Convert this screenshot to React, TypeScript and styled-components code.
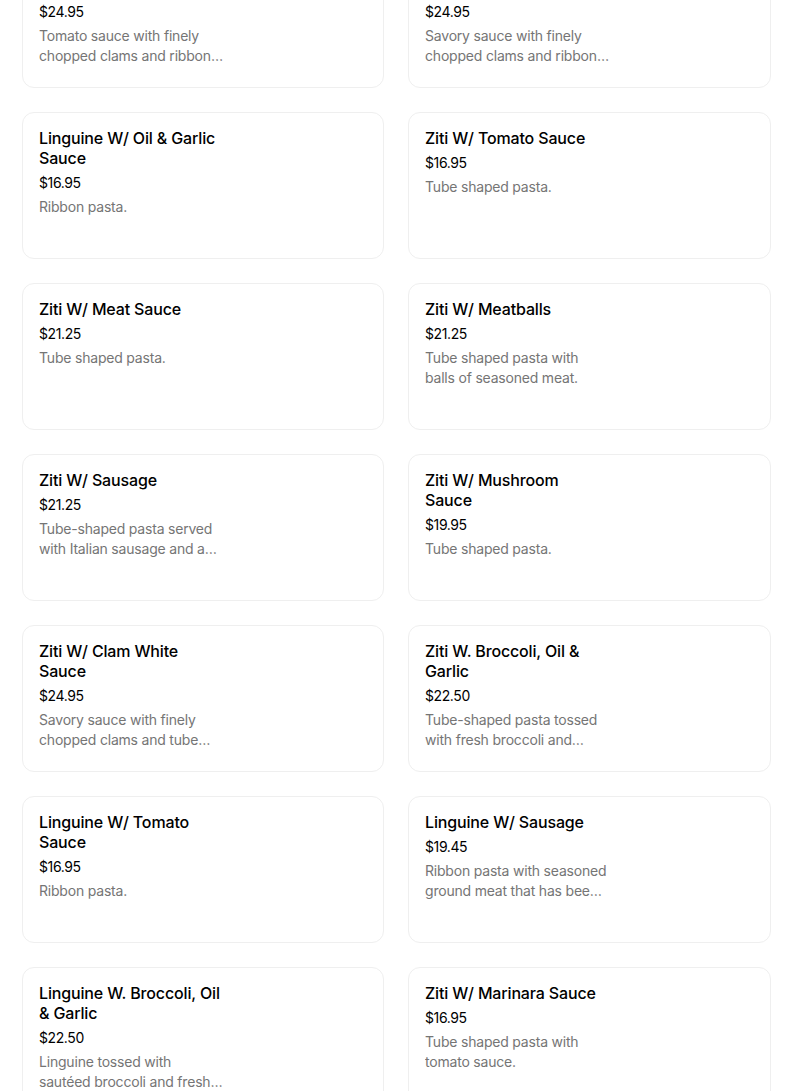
import React from "react";
import styled, { createGlobalStyle } from "styled-components";

const Global = createGlobalStyle`
  html, body { margin: 0; padding: 0; background: #ffffff; }
  body { font-family: "Inter", "Roboto", "Liberation Sans", sans-serif; color: #000; overflow: hidden; }
`;

type Item = { title: string; price: string; desc: string };

const items: Item[] = [
  { title: "Linguine W/ Red Clam Sauce", price: "$24.95", desc: "Tomato sauce with finely chopped clams and ribbon pasta." },
  { title: "Linguine W/ White Clam Sauce", price: "$24.95", desc: "Savory sauce with finely chopped clams and ribbon pasta." },
  { title: "Linguine W/ Oil & Garlic Sauce", price: "$16.95", desc: "Ribbon pasta." },
  { title: "Ziti W/ Tomato Sauce", price: "$16.95", desc: "Tube shaped pasta." },
  { title: "Ziti W/ Meat Sauce", price: "$21.25", desc: "Tube shaped pasta." },
  { title: "Ziti W/ Meatballs", price: "$21.25", desc: "Tube shaped pasta with balls of seasoned meat." },
  { title: "Ziti W/ Sausage", price: "$21.25", desc: "Tube-shaped pasta served with Italian sausage and a rich tomato sauce." },
  { title: "Ziti W/ Mushroom Sauce", price: "$19.95", desc: "Tube shaped pasta." },
  { title: "Ziti W/ Clam White Sauce", price: "$24.95", desc: "Savory sauce with finely chopped clams and tube shaped pasta." },
  { title: "Ziti W. Broccoli, Oil & Garlic", price: "$22.50", desc: "Tube-shaped pasta tossed with fresh broccoli and garlic in olive oil." },
  { title: "Linguine W/ Tomato Sauce", price: "$16.95", desc: "Ribbon pasta." },
  { title: "Linguine W/ Sausage", price: "$19.45", desc: "Ribbon pasta with seasoned ground meat that has been formed into links." },
  { title: "Linguine W. Broccoli, Oil & Garlic", price: "$22.50", desc: "Linguine tossed with sautéed broccoli and fresh garlic in olive oil." },
  { title: "Ziti W/ Marinara Sauce", price: "$16.95", desc: "Tube shaped pasta with tomato sauce." },
];

const Grid = styled.div`
  display: grid;
  grid-template-columns: 362px 363px;
  column-gap: 24px;
  row-gap: 24px;
  padding-left: 22px;
  margin-top: -59px;
`;

const Card = styled.div`
  box-sizing: border-box;
  height: 147px;
  border: 1px solid #efefef;
  border-radius: 12px;
  padding: 15px 16px;
  display: flex;
  flex-direction: column;
  background: #fff;
`;

const Title = styled.div`
  width: 184px;
  font-size: 16px;
  line-height: 20px;
  font-weight: 500;
  letter-spacing: -0.15px;
  color: #000;
`;

const Price = styled.div`
  margin-top: 5px;
  font-size: 14px;
  line-height: 20px;
  color: #000;
  letter-spacing: -0.4px;
`;

const Desc = styled.div`
  margin-top: 4px;
  width: 184px;
  font-size: 14px;
  line-height: 20px;
  letter-spacing: -0.2px;
  color: #757575;
  display: -webkit-box;
  -webkit-line-clamp: 2;
  -webkit-box-orient: vertical;
  overflow: hidden;
`;

export default function App() {
  return (
    <>
      <Global />
      <Grid>
        {items.map((it, i) => (
          <Card key={i}>
            <Title>{it.title}</Title>
            <Price>{it.price}</Price>
            <Desc>{it.desc}</Desc>
          </Card>
        ))}
      </Grid>
    </>
  );
}
